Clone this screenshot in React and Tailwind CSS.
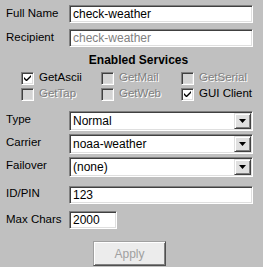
import React from "react";

const sunken =
  "border border-t-[#808080] border-l-[#808080] border-b-white border-r-white shadow-[inset_1px_1px_0_#404040,inset_-1px_-1px_0_#dfdfdf]";

const Label = ({ children, lift = "pb-px" }) => (
  <div className={`w-[69px] shrink-0 pl-[6px] text-[11.5px] text-black ${lift}`}>{children}</div>
);

const TextField = ({ value, width = "w-[184px]", disabled }) => (
  <div className={`${sunken} ${width} h-[18px] bg-white flex items-center px-[3px]`}>
    <span className={`text-[12px] leading-none ${disabled ? "text-[#808080]" : "text-black"}`}>
      {value}
    </span>
  </div>
);

const Combo = ({ value }) => (
  <div className={`${sunken} w-[184px] h-[20px] bg-white flex items-center justify-between pl-[3px] pr-px`}>
    <span className="text-[12px] leading-none text-black">{value}</span>
    <div className="w-[17px] h-[16px] bg-[#e0e0e0] border border-t-[#dfdfdf] border-l-[#dfdfdf] border-b-[#404040] border-r-[#404040] shadow-[inset_1px_1px_0_#fff,inset_-1px_-1px_0_#808080] flex items-center justify-center">
      <svg width="7" height="4" viewBox="0 0 7 4">
        <path d="M0 0h7L3.5 4z" fill="#000" />
      </svg>
    </div>
  </div>
);

const Check = ({ label, checked, disabled }) => (
  <div className="w-[80px] h-[13px] flex items-center gap-[5px]">
    <div
      className={`${sunken} w-[13px] h-[13px] shrink-0 flex items-center justify-center ${
        disabled ? "bg-[#d4d4d4]" : "bg-white"
      }`}
    >
      {checked && (
        <svg width="7" height="7" viewBox="0 0 7 7">
          <path d="M0 2v2l2 2h1l4-4V0L2.5 4.5z" fill="#000" />
        </svg>
      )}
    </div>
    <span
      className={`text-[11.5px] leading-none ${
        disabled ? "text-[#808080] [text-shadow:1px_1px_0_#fff]" : "text-black"
      }`}
    >
      {label}
    </span>
  </div>
);

const App = () => {
  return (
    <div className="w-[263px] h-[267px] bg-[#c0c0c0] font-['Liberation_Sans',Arial,sans-serif] flex flex-col">
      <div className="flex items-center mt-[5px]">
        <Label>Full Name</Label>
        <TextField value="check-weather" />
      </div>
      <div className="flex items-center mt-[6px]">
        <Label>Recipient</Label>
        <TextField value="check-weather" disabled />
      </div>

      <div className="mt-[5px] h-[14px] text-center text-[12px] leading-[14px] font-bold text-black pl-[14px]">
        Enabled Services
      </div>

      <div className="mt-[5px] pl-[21px] flex flex-col gap-[3px]">
        <div className="flex">
          <Check label="GetAscii" checked />
          <Check label="GetMail" disabled />
          <Check label="GetSerial" disabled />
        </div>
        <div className="flex">
          <Check label="GetTap" disabled />
          <Check label="GetWeb" disabled />
          <Check label="GUI Client" checked />
        </div>
      </div>

      <div className="mt-[10px] flex flex-col gap-[3px]">
        <div className="flex items-center">
          <Label lift="pb-[3px]">Type</Label>
          <Combo value="Normal" />
        </div>
        <div className="flex items-center">
          <Label lift="pb-[3px]">Carrier</Label>
          <Combo value="noaa-weather" />
        </div>
        <div className="flex items-center">
          <Label lift="pb-[3px]">Failover</Label>
          <Combo value="(none)" />
        </div>
      </div>

      <div className="flex items-center mt-[8px]">
        <Label lift="pb-[2px]">ID/PIN</Label>
        <TextField value="123" />
      </div>
      <div className="flex items-center mt-[6px]">
        <Label lift="pb-[2px]">Max Chars</Label>
        <TextField value="2000" width="w-[48px]" />
      </div>

      <div className="mt-[11px] pl-[93px]">
        <button
          type="button"
          disabled
          className="w-[73px] h-[25px] bg-[#ececec] border border-t-[#a0a0a0] border-l-[#a0a0a0] border-b-[#505050] border-r-[#505050] shadow-[inset_1px_1px_0_#fff,inset_-1px_-1px_0_#808080] text-[12px] text-[#a0a0a0]"
        >
          Apply
        </button>
      </div>
    </div>
  );
};

export default App;
